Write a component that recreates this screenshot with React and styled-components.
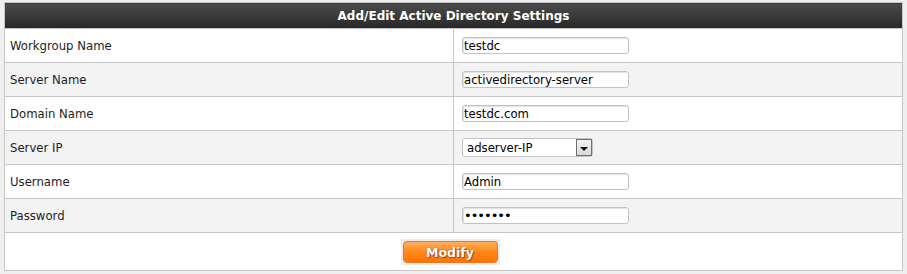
import styled, { createGlobalStyle } from "styled-components";

const GlobalStyle = createGlobalStyle`
  html, body {
    margin: 0;
    padding: 0;
    background: #efefef;
  }
  body {
    font-family: "DejaVu Sans", Verdana, sans-serif;
    font-size: 11.7px;
    line-height: 14px;
  }
`;

const Page = styled.div`
  width: 907px;
  height: 274px;
  padding: 2px 4px 0 4px;
  box-sizing: border-box;
`;

const Panel = styled.table`
  width: 899px;
  border-collapse: collapse;
  border: 1px solid #c6c6c6;
  background: #ffffff;
`;

const HeadCell = styled.th`
  height: 25px;
  padding: 0;
  background: linear-gradient(to bottom, #4b4b4b 0%, #3a3a3a 50%, #262626 100%);
  color: #ffffff;
  font-size: 12px;
  line-height: 14px;
  font-weight: bold;
  text-align: center;
  border-bottom: 1px solid #c6c6c6;
`;

const Row = styled.tr`
  background: ${(p) => (p.$alt ? "#f3f3f3" : "#ffffff")};
`;

const Label = styled.td`
  width: 443px;
  height: 33px;
  padding: 0 0 0 5px;
  color: #1e1e1e;
  border-bottom: 1px solid #c6c6c6;
  border-right: 1px solid #c6c6c6;
`;

const Field = styled.td`
  height: 33px;
  padding: 0 0 0 8px;
  border-bottom: 1px solid #c6c6c6;
`;

const TextBox = styled.input`
  display: block;
  width: 167px;
  height: 17px;
  box-sizing: border-box;
  padding: 0 1px;
  margin: 0;
  border: 1px solid #c2c2c2;
  border-radius: 3px;
  box-shadow: inset 1px 1px 1px rgba(0, 0, 0, 0.12);
  background: #ffffff;
  font-family: "DejaVu Sans", Verdana, sans-serif;
  font-size: 11.7px;
  color: #000000;
  outline: none;

  &[type="password"] {
    font-size: 13px;
    letter-spacing: -1px;
  }
`;

const SelectBox = styled.div`
  display: flex;
  align-items: center;
  width: 131px;
  height: 19px;
  box-sizing: border-box;
  border: 1px solid #c2c2c2;
  border-radius: 3px;
  background: #ffffff;
  padding-left: 4px;
  color: #000000;
`;

const SelectText = styled.span`
  flex: 1;
`;

const Arrow = styled.div`
  width: 16px;
  height: 17px;
  box-sizing: border-box;
  border: 1px solid #6f6f6f;
  background: linear-gradient(to bottom, #f4f4f4, #d8d8d8);
  display: flex;
  align-items: center;
  justify-content: center;
`;

const Triangle = styled.div`
  width: 0;
  height: 0;
  border-left: 4px solid transparent;
  border-right: 4px solid transparent;
  border-top: 4px solid #111111;
  margin-top: 2px;
`;

const ActionCell = styled.td`
  height: 37px;
  padding: 0 7px 0 0;
  text-align: center;
`;

const ButtonFrame = styled.span`
  display: inline-block;
  vertical-align: middle;
  padding: 2px;
  background: #ececec;
  margin-top: 1px;
`;

const Button = styled.button`
  display: block;
  width: 95px;
  height: 22px;
  border: 1px solid #e9782a;
  border-radius: 4px;
  background: linear-gradient(to bottom, #ffb060 0%, #ff8a1e 45%, #ff7400 100%);
  color: #ffffff;
  font-family: "DejaVu Sans", Verdana, sans-serif;
  font-size: 12.5px;
  font-weight: bold;
  text-shadow: 0 0 1px #8a3c00, 1px 1px 1px #a54800;
  padding: 0;
  cursor: pointer;
`;

const fields = [
  { label: "Workgroup Name", value: "testdc" },
  { label: "Server Name", value: "activedirectory-server" },
  { label: "Domain Name", value: "testdc.com" },
  { label: "Server IP", select: "adserver-IP" },
  { label: "Username", value: "Admin" },
  { label: "Password", value: "1234567", type: "password" },
];

export default function App() {
  return (
    <Page>
      <GlobalStyle />
      <Panel>
        <thead>
          <tr>
            <HeadCell colSpan={2}>Add/Edit Active Directory Settings</HeadCell>
          </tr>
        </thead>
        <tbody>
          {fields.map((f, i) => (
            <Row key={f.label} $alt={i % 2 === 1}>
              <Label>{f.label}</Label>
              <Field>
                {f.select ? (
                  <SelectBox>
                    <SelectText>{f.select}</SelectText>
                    <Arrow>
                      <Triangle />
                    </Arrow>
                  </SelectBox>
                ) : (
                  <TextBox type={f.type || "text"} defaultValue={f.value} />
                )}
              </Field>
            </Row>
          ))}
          <tr>
            <ActionCell colSpan={2}>
              <ButtonFrame>
                <Button>Modify</Button>
              </ButtonFrame>
            </ActionCell>
          </tr>
        </tbody>
      </Panel>
    </Page>
  );
}
